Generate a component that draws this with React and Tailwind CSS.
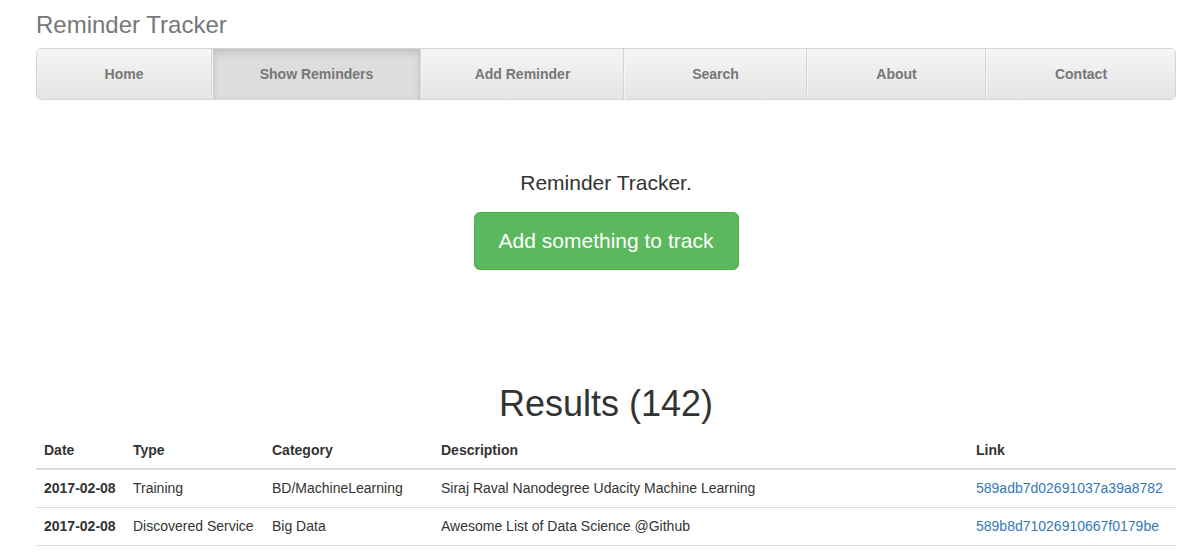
import React from "react";

const NAV = [
  { label: "Home", w: "w-[175px]" },
  { label: "Show Reminders", w: "w-[209px]", active: true },
  { label: "Add Reminder", w: "w-[203px]" },
  { label: "Search", w: "w-[183px]" },
  { label: "About", w: "w-[179px]" },
  { label: "Contact", w: "flex-1" },
];

const ROWS = [
  {
    date: "2017-02-08",
    type: "Training",
    category: "BD/MachineLearning",
    description: "Siraj Raval Nanodegree Udacity Machine Learning",
    link: "589adb7d02691037a39a8782",
  },
  {
    date: "2017-02-08",
    type: "Discovered Service",
    category: "Big Data",
    description: "Awesome List of Data Science @Github",
    link: "589b8d71026910667f0179be",
  },
];

const App = () => {
  return (
    <div className="min-h-screen bg-white font-['Liberation_Sans',Arial,sans-serif] text-[#333] text-[14px]">
      <div className="ml-[36px] w-[1140px]">
        {/* Masthead */}
        <h3 className="pt-[12px] text-[24px] leading-[26px] text-[#777]">
          Reminder Tracker
        </h3>

        {/* Justified nav */}
        <nav className="mt-[10px] flex h-[52px] rounded-[5px] border border-[#d5d5d5] overflow-hidden">
          {NAV.map((item, i) => (
            <a
              key={item.label}
              href="#"
              className={[
                "flex items-center justify-center font-bold text-[#777]",
                item.w,
                i > 0 ? "border-l border-l-[#f5f5f5]" : "",
                i < NAV.length - 1 ? "border-r border-r-[#d5d5d5]" : "",
                item.active
                  ? "bg-[#ddd] shadow-[inset_0_3px_7px_rgba(0,0,0,0.15)]"
                  : "bg-linear-to-b from-[#f5f5f5] to-[#e5e5e5]",
              ].join(" ")}
            >
              {item.label}
            </a>
          ))}
        </nav>

        {/* Jumbotron */}
        <div className="flex flex-col items-center pt-[68px]">
          <p className="text-[21px] leading-[30px] text-[#333]">Reminder Tracker.</p>
          <a
            href="#"
            className="mt-[14px] flex h-[58px] w-[265px] items-center justify-center rounded-[6px] border border-[#4cae4c] bg-[#5cb85c] text-[21px] text-white"
          >
            Add something to track
          </a>
        </div>

        {/* Results */}
        <h1 className="mt-[114px] text-center text-[36px] leading-[40px] text-[#333]">
          Results (142)
        </h1>

        <table className="mt-[8px] w-full border-collapse text-left">
          <thead>
            <tr className="border-b-2 border-[#ddd]">
              <th className="w-[89px] px-[8px] py-[8px] leading-[20px] font-bold">Date</th>
              <th className="w-[139px] px-[8px] py-[8px] leading-[20px] font-bold">Type</th>
              <th className="w-[169px] px-[8px] py-[8px] leading-[20px] font-bold">Category</th>
              <th className="w-[535px] px-[8px] py-[8px] leading-[20px] font-bold">Description</th>
              <th className="px-[8px] py-[8px] leading-[20px] font-bold">Link</th>
            </tr>
          </thead>
          <tbody>
            {ROWS.map((r) => (
              <tr key={r.link} className="border-b border-[#ddd]">
                <td className="px-[8px] pt-[8px] pb-[9px] leading-[20px] font-bold">{r.date}</td>
                <td className="px-[8px] pt-[8px] pb-[9px] leading-[20px]">{r.type}</td>
                <td className="px-[8px] pt-[8px] pb-[9px] leading-[20px]">{r.category}</td>
                <td className="px-[8px] pt-[8px] pb-[9px] leading-[20px]">{r.description}</td>
                <td className="px-[8px] pt-[8px] pb-[9px] leading-[20px]">
                  <a href="#" className="text-[#337ab7]">
                    {r.link}
                  </a>
                </td>
              </tr>
            ))}
          </tbody>
        </table>
      </div>
    </div>
  );
};

export default App;
